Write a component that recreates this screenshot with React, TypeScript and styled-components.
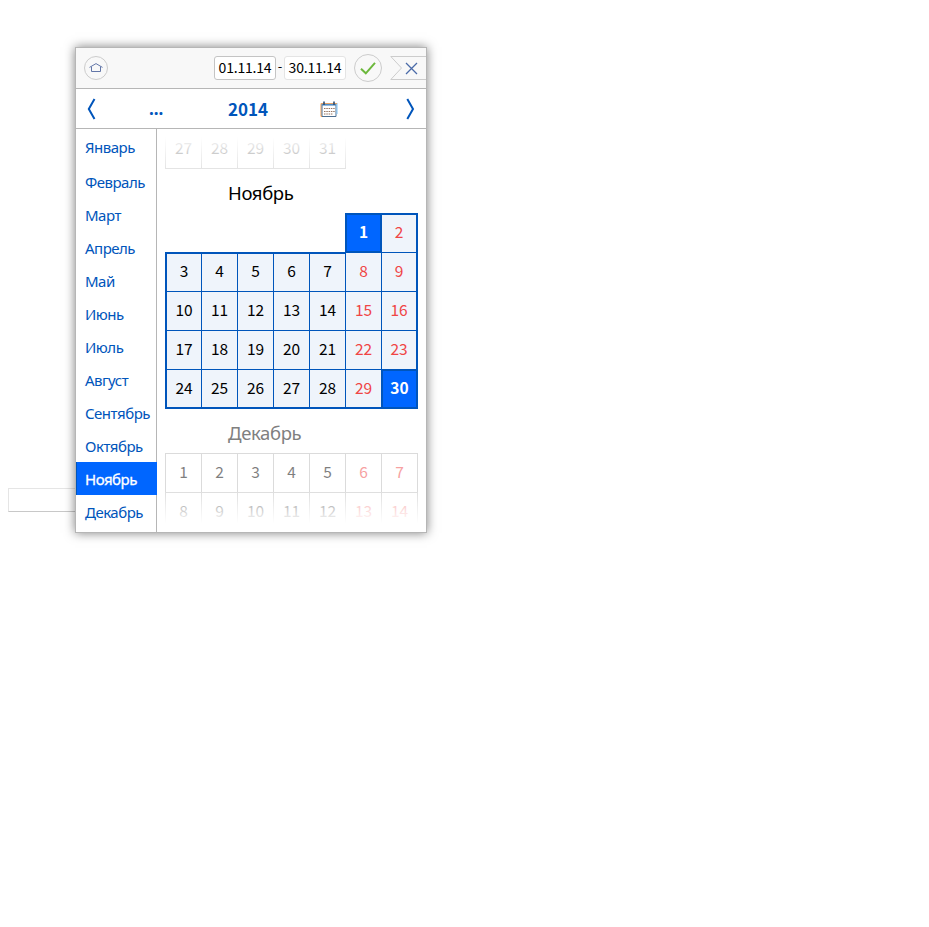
import React from 'react';
import styled, { createGlobalStyle } from 'styled-components';

const Global = createGlobalStyle`
  * { box-sizing: border-box; }
  body { margin: 0; background: #fff; }
`;

const Stage = styled.main`
  position: relative;
  height: 927px;
  overflow: hidden;
  font-family: "Noto Sans CJK SC", "Noto Sans", sans-serif;
`;

const Field = styled.div`
  position: absolute;
  left: 8px;
  top: 488px;
  width: 150px;
  height: 24px;
  background: #fff;
  border: 1px solid #e5e5e5;
  border-bottom-color: #c8c8c8;
`;

const Popup = styled.section`
  position: absolute;
  left: 75px;
  top: 47px;
  width: 352px;
  height: 486px;
  display: flex;
  flex-direction: column;
  background: #fff;
  border: 1px solid #b6b6b6;
  box-shadow: 0 0 10px rgba(0, 0, 0, 0.5);
`;

const Toolbar = styled.header`
  height: 41px;
  flex: none;
  display: flex;
  align-items: center;
  background: #f8f8f8;
  border-bottom: 1px solid #b6b6b6;
`;

const HomeButton = styled.div`
  width: 24px;
  height: 24px;
  margin-left: 8px;
  display: flex;
  align-items: center;
  justify-content: center;
  border: 1px solid #ccc;
  border-radius: 50%;
`;

const DateBox = styled.div<{ $active?: boolean }>`
  width: 62px;
  height: 24px;
  background: #fff;
  border: 1px solid ${(p) => (p.$active ? '#c4c4c4' : '#e4e4e4')};
  border-radius: 3px;
  color: #000;
  font-size: 14px;
  line-height: 20px;
  letter-spacing: -0.2px;
  text-align: center;
`;

const Dates = styled.div`
  margin-left: 106px;
  display: flex;
  align-items: center;
`;

const Dash = styled.span`
  width: 8px;
  height: 24px;
  font-size: 13px;
  line-height: 20px;
  text-align: center;
`;

const ApplyButton = styled.div`
  width: 28px;
  height: 28px;
  margin-left: 8px;
  display: flex;
  align-items: center;
  justify-content: center;
  border: 1px solid #ccc;
  border-radius: 50%;
`;

const CloseIcon = styled.svg`
  margin-left: 8px;
  flex: none;
`;

const YearBar = styled.nav`
  height: 40px;
  flex: none;
  display: grid;
  grid-template-columns: 59px 42px 142px 21px 1fr 26px;
  align-items: center;
  border-bottom: 1px solid #b6b6b6;
  color: #0055bb;
`;

const YearArrow = styled.svg`
  margin-top: 1px;
`;

const CalendarIcon = styled.svg`
  margin: 1px 0 0 1px;
`;

const Ellipsis = styled.span`
  padding-left: 14px;
  font-family: "Noto Sans", sans-serif;
  font-size: 17px;
  line-height: 38px;
  font-weight: 700;
`;

const Year = styled.span`
  padding-left: 51px;
  font-size: 17px;
  line-height: 38px;
  font-weight: 700;
`;

const Body = styled.div`
  flex: 1;
  display: flex;
  min-height: 0;
`;

const Months = styled.ul`
  width: 81px;
  margin: 0;
  padding: 0;
  list-style: none;
  border-right: 1px solid #b6b6b6;
`;

const Month = styled.li<{ $first?: boolean; $current?: boolean }>`
  height: ${(p) => (p.$first ? 36 : 33)}px;
  width: ${(p) => (p.$current ? 81 : 80)}px;
  padding-left: ${(p) => (p.$current ? 8 : 9)}px;
  border-left: ${(p) => (p.$current ? '1px solid #0055bb' : '0')};
  background: ${(p) => (p.$current ? '#0066ff' : 'transparent')};
  color: ${(p) => (p.$current ? '#fff' : '#0055bb')};
  font-family: "Noto Sans", sans-serif;
  font-size: 15px;
  letter-spacing: -0.5px;
  line-height: ${(p) => (p.$first ? 37 : 34)}px;
  white-space: nowrap;
  -webkit-text-stroke: ${(p) => (p.$current ? '0.3px #fff' : '0')};
`;

const Scroller = styled.div`
  position: relative;
  flex: 1;
  padding-left: 8px;
  overflow: hidden;
`;

const Fade = styled.div<{ $bottom?: boolean }>`
  position: absolute;
  left: 0;
  right: 0;
  height: 40px;
  ${(p) =>
    p.$bottom
      ? 'bottom: 0; background: linear-gradient(to top, #fff 22%, rgba(255,255,255,0.1));'
      : 'top: 0; background: linear-gradient(#fff 20%, rgba(255,255,255,0.25));'}
`;

const MonthTitle = styled.h2<{ $muted?: boolean }>`
  height: 45px;
  margin: 0;
  padding-left: 63px;
  font-family: "Noto Sans", sans-serif;
  font-size: 18.5px;
  letter-spacing: -0.35px;
  line-height: 49px;
  font-weight: 400;
  color: ${(p) => (p.$muted ? '#808080' : '#000')};
`;

const Grid = styled.div<{ $muted?: boolean }>`
  width: 253px;
  display: grid;
  grid-template-columns: repeat(7, 36px);
  grid-auto-rows: 39px;
  opacity: ${(p) => (p.$muted ? 0.5 : 1)};
`;

type Edges = { t?: boolean; r?: boolean; b?: boolean; l?: boolean };

const Day = styled.div<{ $weekend?: boolean; $muted?: boolean; $end?: boolean; $edges: Edges; $col: number }>`
  position: relative;
  grid-column: ${(p) => p.$col};
  width: 37px;
  height: 40px;
  z-index: ${(p) => (p.$end ? 2 : 'auto')};
  border-style: solid;
  border-color: ${(p) => (p.$muted ? '#b8b8b8' : '#0055bb')};
  border-width: ${({ $edges: e }) => `${e.t ? 2 : 1}px ${e.r ? 2 : 1}px ${e.b ? 2 : 1}px ${e.l ? 2 : 1}px`};
  padding-top: ${({ $edges: e }) => (e.t ? 4 : 5)}px;
  background: ${(p) => (p.$end ? '#0066ff' : p.$muted ? '#fff' : '#eff4fb')};
  color: ${(p) => (p.$end ? '#fff' : p.$weekend ? '#f04545' : '#000')};
  text-align: center;
  font-size: 15.5px;
  font-weight: ${(p) => (p.$end ? 700 : 400)};
  line-height: 24px;
`;

const monthNames = [
  'Январь', 'Февраль', 'Март', 'Апрель', 'Май', 'Июнь',
  'Июль', 'Август', 'Сентябрь', 'Октябрь', 'Ноябрь', 'Декабрь',
];

const range = (from: number, to: number) => Array.from({ length: to - from + 1 }, (_, i) => from + i);

function MonthGrid({ from, to, startCol, muted }: { from: number; to: number; startCol: number; muted?: boolean }) {
  return (
    <Grid $muted={muted}>
      {range(from, to).map((d, i) => {
        const col = ((startCol - 1 + i) % 7) + 1;
        const end = !muted && (d === 1 || d === 30);
        const edges: Edges = muted ? {} : {
          t: d <= 7 || end,
          r: col === 7 || end,
          b: d >= 24 || end,
          l: col === 1 || end,
        };
        return (
          <Day key={d} $col={col} $weekend={col > 5} $muted={muted} $end={end} $edges={edges}>{d}</Day>
        );
      })}
    </Grid>
  );
}

export default function App() {
  return (
    <Stage>
      <Global />
      <Field />
      <Popup>
        <Toolbar>
          <HomeButton>
            <svg width="14" height="11" viewBox="0 0 14 11" fill="none" stroke="#6276a8" strokeWidth="1">
              <path d="M0.5 4.4 L7 0.6 L13.5 4.4 M2.5 3.6 V8.5 H11.5 V3.6" />
            </svg>
          </HomeButton>
          <Dates>
            <DateBox $active>01.11.14</DateBox>
            <Dash>-</Dash>
            <DateBox>30.11.14</DateBox>
          </Dates>
          <ApplyButton>
            <svg width="16" height="14" viewBox="0 0 16 14" fill="none" stroke="#6cb83c" strokeWidth="2">
              <path d="M1 7.8 L5.8 12.3 L15 1.8" />
            </svg>
          </ApplyButton>
          <CloseIcon width="36" height="24" viewBox="0 0 36 24" fill="none">
            <path d="M36 0.5 H0.8 L11.5 12 L0.8 23.5 H36" stroke="#ccc" />
            <path d="M16 7 L27 18 M27 7 L16 18" stroke="#4a6aa8" strokeWidth="1.3" />
          </CloseIcon>
        </Toolbar>
        <YearBar>
          <YearArrow width="28" height="24" viewBox="0 0 28 24" fill="none" stroke="#0055bb" strokeWidth="2">
            <path d="M18.5 2 L12.8 12 L18.5 22" />
          </YearArrow>
          <Ellipsis>...</Ellipsis>
          <Year>2014</Year>
          <CalendarIcon width="18" height="17" viewBox="0 0 18 17" fill="none">
            <path d="M1 2.5 V15.5 H14" stroke="#f09848" />
            <path d="M2 2 V15 M2 15.5 H16 V3" stroke="#4c6e90" />
            <path d="M17 2 V13" stroke="#7cc4f8" />
            <path d="M1 2.5 H17" stroke="#e8a468" />
            <path d="M2 3.8 H16" stroke="#4f8cc4" strokeWidth="1.6" />
            <path d="M4 0.5 V4 M14 0.5 V4" stroke="#2c4c70" strokeWidth="1.6" />
            <path d="M4 7.5 H15 M4 10.5 H15 M4 13 H13" stroke="#967460" strokeDasharray="1.5 0.8" />
          </CalendarIcon>
          <span />
          <YearArrow width="26" height="24" viewBox="0 0 26 24" fill="none" stroke="#0055bb" strokeWidth="2">
            <path d="M7.3 2 L13 12 L7.3 22" />
          </YearArrow>
        </YearBar>
        <Body>
          <Months>
            {monthNames.map((name, i) => (
              <Month key={name} $first={i === 0} $current={i === 10}>{name}</Month>
            ))}
          </Months>
          <Scroller>
            <MonthGrid from={27} to={31} startCol={1} muted />
            <MonthTitle>Ноябрь</MonthTitle>
            <MonthGrid from={1} to={30} startCol={6} />
            <MonthTitle $muted>Декабрь</MonthTitle>
            <MonthGrid from={1} to={14} startCol={1} muted />
            <Fade />
            <Fade $bottom />
          </Scroller>
        </Body>
      </Popup>
    </Stage>
  );
}
